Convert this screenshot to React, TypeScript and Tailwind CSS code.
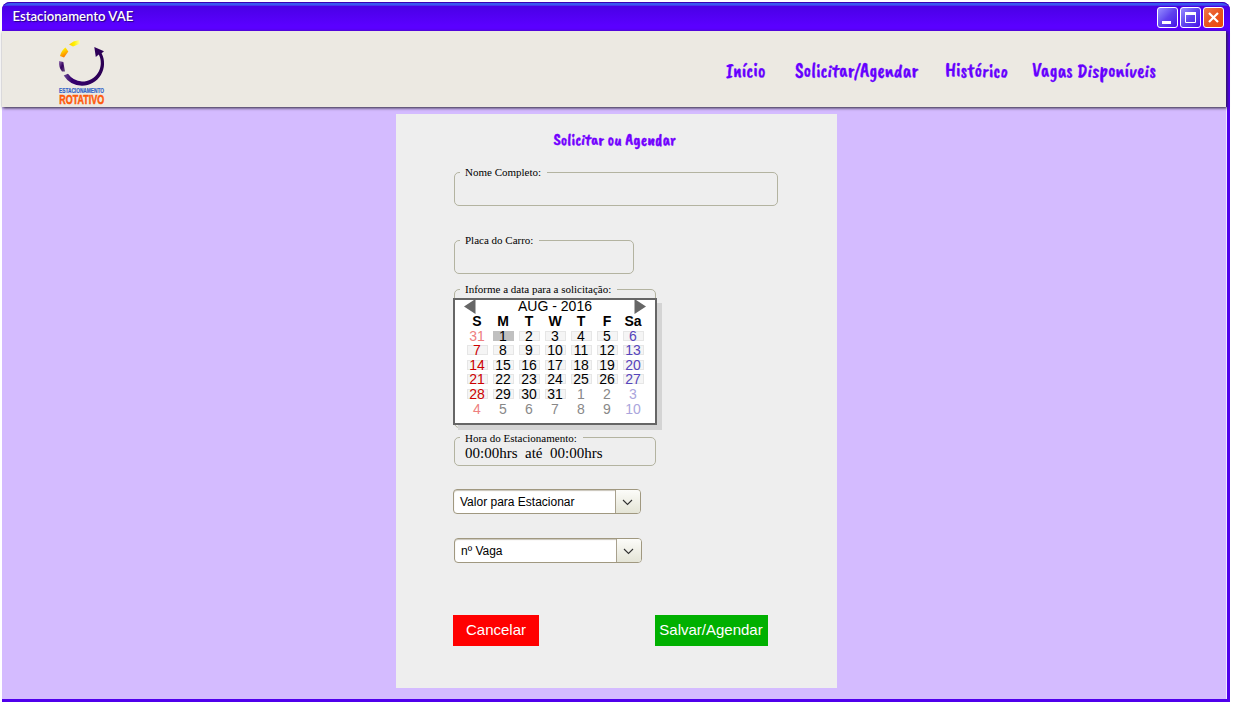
import type { ReactNode } from "react";

const brush = "font-['Caveat_Brush','Open_Sans',sans-serif]";
const serif = "font-['Liberation_Serif',serif]";

function Group({ label, className, labelTop = "top-[-8px]", children }: { label: string; className: string; labelTop?: string; children?: ReactNode }) {
  return (
    <div className={`relative rounded-[5px] border border-[#b3b3a0] ${className}`}>
      <span className={`absolute left-[5px] h-[14px] whitespace-nowrap bg-[#eeeeee] pl-[5px] pr-[6px] text-[11px] leading-[14px] text-black ${labelTop} ${serif}`}>
        {label}
      </span>
      {children}
    </div>
  );
}

function Combo({ label, className }: { label: string; className: string }) {
  return (
    <div className={`flex h-[25px] w-[188px] overflow-hidden rounded-[4px] border border-[#a09880] bg-white shadow-[inset_0_1px_1px_#c8c4b8] ${className}`}>
      <span className="w-[161px] whitespace-nowrap pl-[6px] text-[12px] leading-[24px] text-black">{label}</span>
      <span className="flex flex-1 items-center justify-center border-l border-[#a8a18e] bg-gradient-to-b from-[#fcfcf9] to-[#e4e4d6] pr-[1px] pt-[1px]">
        <svg width="11" height="7" viewBox="0 0 11 7" fill="none" stroke="#333" strokeWidth="1.1">
          <path d="M1 1 L5.5 5.5 L10 1" />
        </svg>
      </span>
    </div>
  );
}

function Logo() {
  return (
    <svg className="ml-[54px] mt-[8px] block overflow-visible" width="54" height="67" viewBox="56 39 54 67">
      <defs>
        <linearGradient id="ring" x1="0" y1="0" x2="1" y2="0">
          <stop offset="0" stopColor="#6a4a90" />
          <stop offset="0.2" stopColor="#35006f" />
          <stop offset="1" stopColor="#2b0052" />
        </linearGradient>
        <linearGradient id="sun" x1="0" y1="0" x2="0.4" y2="1">
          <stop offset="0.3" stopColor="#ffe800" />
          <stop offset="1" stopColor="#ff7a00" />
        </linearGradient>
        <linearGradient id="ray" x1="0" y1="0" x2="1" y2="0">
          <stop offset="0" stopColor="#ffc800" />
          <stop offset="0.5" stopColor="#fff200" />
          <stop offset="1" stopColor="#fffbb0" />
        </linearGradient>
        <linearGradient id="dusk" x1="0" y1="0" x2="1" y2="1">
          <stop offset="0" stopColor="#9a78b4" />
          <stop offset="0.5" stopColor="#350060" />
          <stop offset="1" stopColor="#6b5080" />
        </linearGradient>
      </defs>
      <path d="M63.700 75.500 L68 73.800 A18.600 18.600 0 0 0 82 81.500 A18.600 18.600 0 0 0 98.800 54.500 L95.800 57 L94.300 47 L104 51.300 L101.600 53.300 A22.300 22.300 0 0 1 82 85.800 A22.300 22.300 0 0 1 63.700 75.500 Z" fill="url(#ring)" />
      <path d="M69 44.500 L73.500 41.500 L79.500 40 L80 43.800 L73 46.500 Z" fill="url(#ray)" />
      <path d="M60 56 Q61.500 50 65.500 47.500 L68.300 51.500 L64 57.500 Z" fill="url(#sun)" />
      <path d="M59 61 L63.300 62 L65 71.500 L62 71.500 Q58.500 67 59 61 Z" fill="url(#dusk)" />
      <text x="59" y="93" fontFamily="Liberation Sans" fontWeight="700" fontSize="6.4" stroke="#3264c8" strokeWidth="0.200" textLength="45" lengthAdjust="spacingAndGlyphs" fill="#3264c8">ESTACIONAMENTO</text>
      <text x="59.200" y="103.900" fontFamily="Liberation Sans" fontWeight="700" fontSize="12.6" stroke="#ff5a0a" strokeWidth="0.5" textLength="45" lengthAdjust="spacingAndGlyphs" fill="#ff5a0a">ROTATIVO</text>
    </svg>
  );
}

function WindowButton({ kind }: { kind: "min" | "max" | "close" }) {
  const fill = kind === "close" ? "from-[#f07848] via-[#e85420] to-[#f04800]" : "from-[#9a8cff] via-[#6042ee] to-[#4800e8]";
  return (
    <div className={`h-[21px] w-[21px] rounded-[3px] border border-white bg-gradient-to-br ${fill}`}>
      <svg width="19" height="19" viewBox="0 0 19 19" fill="none" stroke="white">
        {kind === "min" && <path d="M4 14.500 H13" strokeWidth="3" />}
        {kind === "max" && (
          <>
            <path d="M4.500 5 V14.500 H14.500 V5" />
            <path d="M4 5.500 H15" strokeWidth="3" />
          </>
        )}
        {kind === "close" && <path d="M5 5 L14 14 M14 5 L5 14" strokeWidth="2.200" />}
      </svg>
    </div>
  );
}

const weeks: number[][] = [
  [31, 1, 2, 3, 4, 5, 6],
  [7, 8, 9, 10, 11, 12, 13],
  [14, 15, 16, 17, 18, 19, 20],
  [21, 22, 23, 24, 25, 26, 27],
  [28, 29, 30, 31, 1, 2, 3],
  [4, 5, 6, 7, 8, 9, 10],
];

function dayColor(col: number, outside: boolean) {
  if (col === 0) return outside ? "text-[#ee8080]" : "text-[#cc0000]";
  if (col === 6) return outside ? "text-[#aaa5dc]" : "text-[#5544bb]";
  return outside ? "text-[#888888]" : "text-black";
}

function Calendar() {
  return (
    <div className="ml-[-2px] mt-[8px] h-[127px] w-[204px] border-2 border-[#666666] bg-white text-[14px] text-black shadow-[5px_5px_0_0_#d4d4d4]">
      <div className="flex h-[14px] items-center justify-between pl-[9px] pr-[9px] leading-[14px]">
        <svg className="mb-px" width="12" height="15" viewBox="0 0 12 15"><path d="M0 7.500 L11.500 0 V15 Z" fill="#666" /></svg>
        <span className="pb-[2px]">AUG - 2016</span>
        <svg className="mb-px" width="12" height="15" viewBox="0 0 12 15"><path d="M12 7.500 L0.500 0 V15 Z" fill="#666" /></svg>
      </div>
      <div className="ml-[9px] grid w-[182px] grid-cols-7 text-center font-bold leading-[14.6px]">
        {["S", "M", "T", "W", "T", "F", "Sa"].map((d, i) => <span key={i}>{d}</span>)}
      </div>
      <div className="ml-[9px] grid w-[182px] grid-cols-7">
        {weeks.flatMap((week, r) =>
          week.map((day, c) => {
            const outside = (r === 0 && c === 0) || (r === 4 && c > 3) || r === 5;
            const box = outside ? "" : r === 0 && c === 1 ? "bg-[#c0c0c0]" : "border border-[#e6e6e6] bg-[#f5f5f5]";
            const height = r === 2 ? "h-[14.2px]" : r === 3 ? "h-[14.8px]" : "h-[14.6px]";
            return (
              <div key={`${r}-${c}`} className={`flex items-center justify-center ${height}`}>
                <div className={`flex h-[10px] w-[21px] items-center justify-center ${box}`}>
                  <span className={`leading-[14px] ${dayColor(c, outside)}`}>{day}</span>
                </div>
              </div>
            );
          }),
        )}
      </div>
    </div>
  );
}

const links = [
  { text: "Início", place: "w-[40px]" },
  { text: "Solicitar/Agendar", place: "ml-[29px] w-[124px]" },
  { text: "Histórico", place: "ml-[26px] w-[63px]" },
  { text: "Vagas Disponíveis", place: "ml-[24px] w-[124px]" },
];

export default function App() {
  return (
    <div className="h-[705px] w-[1236px] overflow-hidden bg-white pl-[2px] pt-[2px] font-['Liberation_Sans',sans-serif]">
      <div className="flex h-[700px] w-[1228px] flex-col rounded-t-[8px] bg-[#5000ec]">
        <div className="flex h-[29px] shrink-0 items-start justify-between overflow-hidden rounded-t-[8px] border-t border-[#3900b8] bg-gradient-to-b from-[#3858f0] from-5% via-[#4a00e6] via-12% to-[#5a00ff] to-80% pl-[10.500px] pr-[6px]">
          <span className="font-['Lato',sans-serif] text-[13.150px] font-semibold leading-[27px] text-white [text-shadow:1px_1px_1px_#24007d]">Estacionamento VAE</span>
          <div className="flex gap-[2px] pt-[4px]">
            <WindowButton kind="min" />
            <WindowButton kind="max" />
            <WindowButton kind="close" />
          </div>
        </div>
        <header className="z-10 flex h-[76px] w-[1224px] shrink-0 items-start justify-between bg-[#ece9e2] shadow-[1px_1px_3px_0px_#252030]">
          <Logo />
          <nav className={`mr-[70px] mt-[26px] flex text-[19.900px] leading-[28px] text-[#6600ff] [-webkit-text-stroke:0.3px_#6600ff] ${brush}`}>
            {links.map((l) => (
              <a key={l.text} className={`block whitespace-nowrap ${l.place}`}>{l.text}</a>
            ))}
          </nav>
        </header>
        <main className="flex h-[592px] w-[1225px] border-r border-[#eee6ff] bg-[#d4bbff] pl-[394px] pt-[7px]">
          <section className="flex h-[574px] w-[441px] flex-col items-start bg-[#eeeeee] pl-[58px]">
            <h1 className={`ml-[99.500px] mt-[14px] h-[24px] w-[124px] whitespace-nowrap text-[16.900px] leading-[24px] text-[#7200ff] [-webkit-text-stroke:0.4px_#7200ff] ${brush}`}>Solicitar ou Agendar</h1>
            <Group label="Nome Completo:" className="mt-[20px] h-[34px] w-[324px] shrink-0" />
            <Group label="Placa do Carro:" className="mt-[34px] h-[34px] w-[180px] shrink-0" />
            <Group label="Informe a data para a solicitação:" className="mt-[15px] h-[139px] w-[202px] shrink-0">
              <Calendar />
            </Group>
            <Group label="Hora do Estacionamento:" labelTop="top-[-7px]" className="mt-[9px] h-[29px] w-[202px] shrink-0">
              <span className={`block whitespace-pre pl-[10px] pt-[6px] text-[15px] leading-[18px] text-black ${serif}`}>{"00:00hrs  até  00:00hrs"}</span>
            </Group>
            <Combo label="Valor para Estacionar" className="ml-[-1px] mt-[23px]" />
            <Combo label="nº Vaga" className="mt-[24px]" />
            <div className="ml-[-1px] mt-[52px] flex gap-[115.500px] text-[15px] leading-[30px] text-white">
              <button className="h-[31px] w-[86px] pb-[1px]">
                <span className="block h-[31px] bg-[#ff0000]">Cancelar</span>
              </button>
              <button className="h-[31px] w-[113px] whitespace-nowrap pb-[1px]">
                <span className="block h-[31px] bg-[#00b000]">Salvar/Agendar</span>
              </button>
            </div>
          </section>
        </main>
      </div>
    </div>
  );
}
